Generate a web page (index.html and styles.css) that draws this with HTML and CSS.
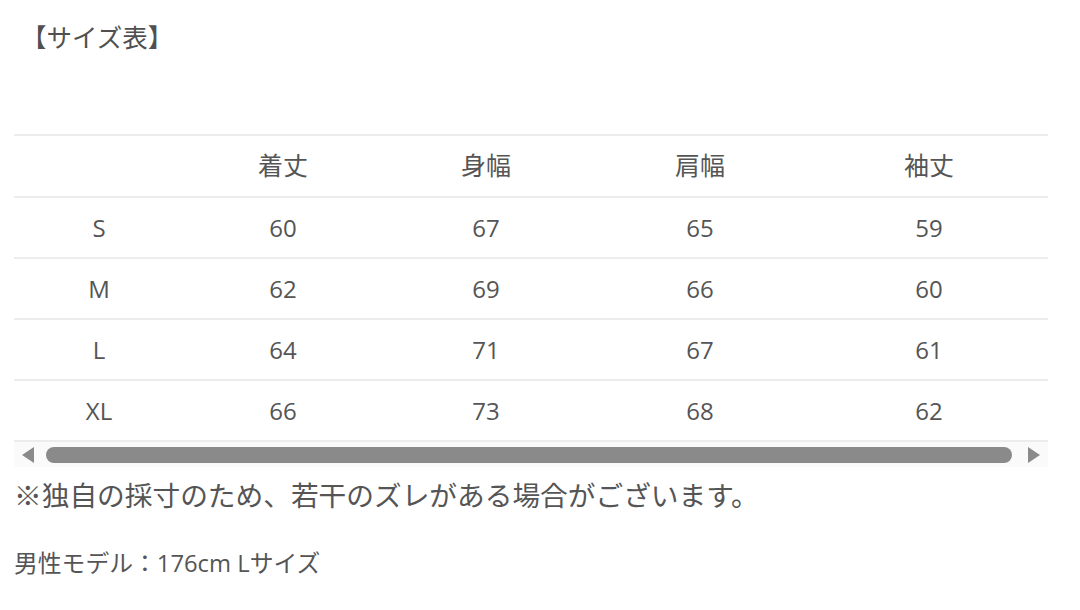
FILE: index.html
```html
<!DOCTYPE html>
<html lang="ja">
<head>
<meta charset="utf-8">
<link rel="stylesheet" href="styles.css">
</head>
<body>
<div class="page">
  <h2 class="title">【サイズ表】</h2>
  <div class="table-wrap">
    <table class="size-table">
      <colgroup>
        <col class="c1"><col class="c2"><col class="c3"><col class="c4"><col class="c5">
      </colgroup>
      <thead>
        <tr><th></th><th>着丈</th><th>身幅</th><th>肩幅</th><th>袖丈</th></tr>
      </thead>
      <tbody>
        <tr><td>S</td><td>60</td><td>67</td><td>65</td><td>59</td></tr>
        <tr><td>M</td><td>62</td><td>69</td><td>66</td><td>60</td></tr>
        <tr><td>L</td><td>64</td><td>71</td><td>67</td><td>61</td></tr>
        <tr><td>XL</td><td>66</td><td>73</td><td>68</td><td>62</td></tr>
      </tbody>
    </table>
    <div class="scrollbar">
      <span class="arrow left"></span>
      <div class="track"><div class="thumb"></div></div>
      <span class="arrow right"></span>
    </div>
  </div>
  <p class="note">※独自の採寸のため、若干のズレがある場合がございます。</p>
  <p class="model">男性モデル：176cm Lサイズ</p>
</div>
</body>
</html>
```
FILE: styles.css
```css
html, body {
  margin: 0;
  padding: 0;
  background: #ffffff;
}
body {
  font-family: "Open Sans", "Noto Sans CJK JP", sans-serif;
  color: #555555;
}
.page {
  padding: 0 32px 0 14px;
}
.title {
  margin: 0 0 0 7px;
  padding-top: 19px;
  font-size: 25.5px;
  font-weight: 400;
  line-height: 34px;
  height: 115px;
  color: #505050;
  font-family: "Noto Sans CJK JP", sans-serif;
}
.table-wrap {
  width: 1034px;
}
.size-table {
  width: 1034px;
  border-collapse: collapse;
  table-layout: fixed;
  border-top: 2px solid #ececec;
}
.c1 { width: 170px; }
.c2 { width: 198px; }
.c3 { width: 208px; }
.c4 { width: 220px; }
.c5 { width: 238px; }
.size-table th,
.size-table td {
  height: 58px;
  padding: 0 0 1px 0;
  text-align: center;
  font-size: 24px;
  font-weight: 400;
  border-bottom: 2px solid #ececec;
  color: #555555;
}
.size-table th {
  height: 56px;
  padding-bottom: 4px;
  font-size: 25px;
  font-family: "Noto Sans CJK JP", sans-serif;
}
.scrollbar {
  display: flex;
  align-items: center;
  height: 25px;
  background: #fafafa;
  padding: 0 8px;
  gap: 12px;
}
.arrow {
  width: 0;
  height: 0;
  border-top: 8px solid transparent;
  border-bottom: 8px solid transparent;
}
.arrow.left {
  border-right: 12px solid #8a8a8a;
}
.arrow.right {
  border-left: 12px solid #8a8a8a;
}
.track {
  flex: 1;
  padding-right: 4px;
}
.thumb {
  height: 16px;
  border-radius: 8px;
  background: #8a8a8a;
}
.note {
  margin: 8px 0 0 0;
  font-size: 27.7px;
  line-height: 38px;
  font-family: "Noto Sans CJK JP", sans-serif;
}
.model {
  margin: 34px 0 0 0;
  font-size: 23.8px;
  line-height: 32px;
}
```
